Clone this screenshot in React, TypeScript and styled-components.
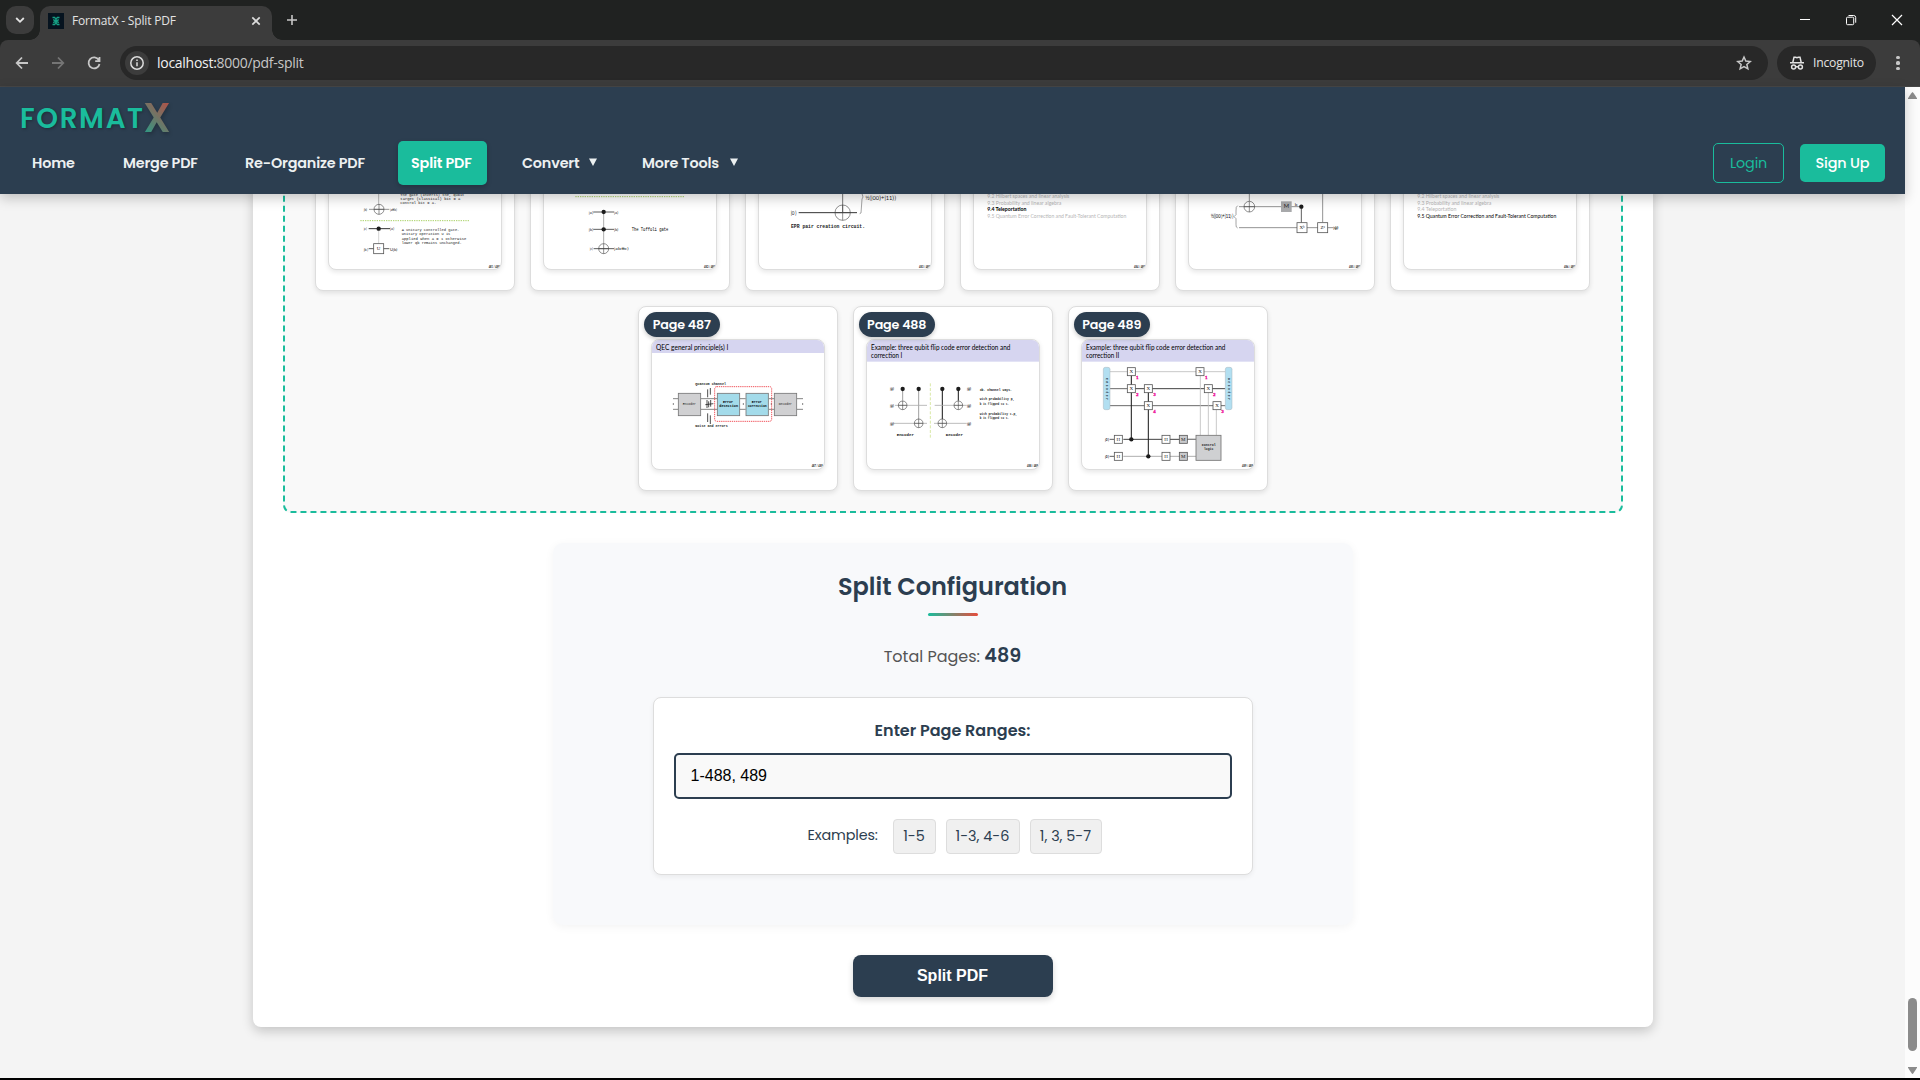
import React from "react";
import styled, { createGlobalStyle } from "styled-components";

const GlobalStyle = createGlobalStyle`
  *, *::before, *::after { box-sizing: border-box; }
  html, body { margin: 0; padding: 0; overflow: hidden; background: #000; }
`;

const brand = `Poppins, Inter, "Open Sans", "Liberation Sans", sans-serif`;
const system = `"Segoe UI", "Open Sans", "Noto Sans", sans-serif`;
const arial = `"Liberation Sans", Arial, sans-serif`;

/* ---------- browser window ---------- */

const Window = styled.div`
  width: 1920px;
  height: 1080px;
  padding-bottom: 2px;
  display: flex;
  flex-direction: column;
  background: #000;
  overflow: hidden;
  font-family: ${brand};
`;

const TabStrip = styled.div`
  height: 40px;
  flex: none;
  display: flex;
  align-items: flex-start;
  padding: 6px 0 0 6px;
  background: #202221;
`;

const TabSearch = styled.div`
  width: 28px;
  height: 28px;
  border-radius: 10px;
  background: #3c3c3c;
  display: grid;
  place-items: center;
  margin-right: 6px;
`;

const Tab = styled.div`
  position: relative;
  width: 232px;
  height: 34px;
  padding: 0 10px 4px 8px;
  border-radius: 10px 10px 0 0;
  background: #3c3c3c;
  display: flex;
  align-items: center;
  &::before, &::after {
    content: "";
    position: absolute;
    bottom: 0;
    width: 10px;
    height: 10px;
  }
  &::before { left: -10px; background: radial-gradient(circle at 0 0, transparent 9.5px, #3c3c3c 10px); }
  &::after { right: -10px; background: radial-gradient(circle at 100% 0, transparent 9.5px, #3c3c3c 10px); }
`;

const TabTitle = styled.span`
  flex: 1;
  margin-left: 8px;
  font: 400 12px/16px ${system};
  letter-spacing: -0.16px;
  color: #e3e3e3;
  white-space: nowrap;
`;

const NewTab = styled.div`
  width: 20px;
  height: 28px;
  margin-left: 10px;
  display: grid;
  place-items: center;
`;

const WindowButtons = styled.div`
  margin-left: auto;
  height: 28px;
  display: flex;
  gap: 34px;
  align-items: center;
  padding-right: 17px;
`;

const ToolbarBack = styled.div`
  flex: none;
  height: 47px;
  background: #202221;
`;

const Toolbar = styled.div`
  height: 47px;
  border-radius: 8px 8px 0 0;
  background: #3c3c3c;
  border-bottom: 1px solid #474747;
  display: flex;
  align-items: center;
  padding: 0 14px 0 12px;
`;

const NavIcon = styled.div`
  width: 20px;
  height: 20px;
  margin-right: 16px;
  display: grid;
  place-items: center;
`;

const Omnibox = styled.div`
  width: 1648px;
  height: 34px;
  border-radius: 17px;
  background: #282828;
  display: flex;
  align-items: center;
  padding: 0 14px 0 5px;
`;

const InfoCircle = styled.div`
  width: 24px;
  height: 24px;
  border-radius: 50%;
  background: #3c3c3c;
  display: grid;
  place-items: center;
`;

const Url = styled.span`
  flex: 1;
  margin-left: 8px;
  font: 400 14px/20px ${system};
  letter-spacing: -0.28px;
  color: #c7c7c7;
  b { font-weight: 400; color: #f1f1f1; }
`;

const Incognito = styled.div`
  width: 99px;
  height: 34px;
  margin-left: 9px;
  border-radius: 17px;
  background: #282828;
  display: flex;
  align-items: center;
  padding-left: 12px;
  gap: 8px;
  font: 400 12.2px/16px ${system};
  letter-spacing: -0.22px;
  color: #e3e3e3;
`;

const MenuDots = styled.div`
  width: 16px;
  margin-left: auto;
  display: flex;
  flex-direction: column;
  align-items: center;
  gap: 2.4px;
  i { width: 3.2px; height: 3.2px; border-radius: 50%; background: #c7c7c7; }
`;

const Viewport = styled.div`
  flex: 1;
  min-height: 0;
  display: flex;
`;

const Page = styled.div`
  width: 1905px;
  display: flex;
  flex-direction: column;
  background: #f4f4f4;
`;

const Scrollbar = styled.div`
  width: 15px;
  background: #fcfcfc;
  display: flex;
  flex-direction: column;
  align-items: center;
  justify-content: space-between;
  padding: 5px 0 4px;
`;

const ScrollThumb = styled.div`
  width: 9px;
  height: 53px;
  border-radius: 5px;
  background: #8b8b8b;
  margin: auto 0 16px;
`;

/* ---------- site header ---------- */

const Header = styled.header`
  position: relative;
  z-index: 2;
  flex: none;
  height: 107px;
  padding: 11px 20px 0 19px;
  background: #2c3e50;
  box-shadow: 0 4px 12px rgba(0, 0, 0, 0.22);
`;

const Logo = styled.div`
  height: 40px;
  padding: 2px 0 0 1px;
  display: flex;
  align-items: center;
  font-size: 27.7px;
  line-height: 40px;
  font-weight: 600;
  letter-spacing: 1.65px;
  color: #1abc9c;
  text-shadow: 1px 1px 3px rgba(0, 0, 0, 0.3);
`;

const LogoX = styled.span`
  margin: -2px 0 0 -1.5px;
  font-size: 40px;
  font-weight: 600;
  letter-spacing: 0;
  text-shadow: none;
  background: linear-gradient(45deg, #1abc9c, #e74c3c);
  background-clip: text;
  -webkit-background-clip: text;
  color: transparent;
  opacity: 0.8;
  filter: drop-shadow(1px 2px 2px rgba(0, 0, 0, 0.3));
`;

const NavRow = styled.nav`
  height: 50px;
  display: flex;
  align-items: center;
`;

const NavItem = styled.a<{ $w: number; $active?: boolean }>`
  width: ${(p) => p.$w}px;
  height: 44px;
  margin-right: 22px;
  padding-left: 13px;
  display: flex;
  align-items: center;
  border-radius: 5px;
  font-size: 14.4px;
  font-weight: 600;
  letter-spacing: -0.18px;
  white-space: nowrap;
  color: ${(p) => (p.$active ? "#fff" : "#ecf0f1")};
  background: ${(p) => (p.$active ? "#1abc9c" : "transparent")};
  box-shadow: ${(p) => (p.$active ? "0 2px 5px rgba(0,0,0,.2)" : "none")};
  svg { margin-left: auto; margin-right: 10px; margin-top: -2px; }
`;

const AuthButton = styled.a<{ $solid?: boolean }>`
  width: ${(p) => (p.$solid ? 85 : 71)}px;
  height: ${(p) => (p.$solid ? 38 : 40)}px;
  margin-left: ${(p) => (p.$solid ? "16px" : "auto")};
  display: grid;
  place-items: center;
  border-radius: 5px;
  border: ${(p) => (p.$solid ? "none" : "1px solid #1abc9c")};
  background: ${(p) => (p.$solid ? "#1abc9c" : "transparent")};
  color: ${(p) => (p.$solid ? "#fff" : "#1abc9c")};
  font-size: 14.4px;
  font-weight: ${(p) => (p.$solid ? 500 : 400)};
  letter-spacing: -0.15px;
`;

/* ---------- page content ---------- */

const Scroller = styled.main`
  flex: 1;
  min-height: 0;
  overflow: hidden;
  display: flex;
  flex-direction: column;
  justify-content: flex-end;
  align-items: center;
  padding-bottom: 51px;
`;

const Container = styled.div`
  flex: none;
  width: 1400px;
  padding: 30px;
  border-radius: 8px;
  background: #fff;
  box-shadow: 0 4px 12px rgba(0, 0, 0, 0.2);
  display: flex;
  flex-direction: column;
  align-items: center;
`;

const DropZone = styled.div`
  width: 1340px;
  padding: 20px;
  border: 2px dashed #1abc9c;
  border-radius: 8px;
  background: #f9f9f9;
  display: flex;
  flex-wrap: wrap;
  justify-content: center;
  gap: 15px;
`;

const Card = styled.div`
  position: relative;
  width: 200px;
  height: 185px;
  padding: 32px 12px 0;
  border: 1px solid #ddd;
  border-radius: 8px;
  background: #fff;
  box-shadow: 0 2px 5px rgba(0, 0, 0, 0.1);
`;

const Badge = styled.div`
  position: absolute;
  left: 5px;
  top: 5px;
  width: 76.5px;
  height: 25px;
  border-radius: 13px;
  background: #2c3e50;
  color: #fff;
  font-size: 12.7px;
  font-weight: 600;
  letter-spacing: -0.15px;
  line-height: 25px;
  text-align: center;
  white-space: nowrap;
  box-shadow: 0 2px 4px rgba(0, 0, 0, 0.2);
`;

const Thumb = styled.div`
  width: 174px;
  height: 131px;
  border: 1px solid #ddd;
  border-radius: 8px;
  overflow: hidden;
  background: #fff;
  box-shadow: 0 2px 5px rgba(0, 0, 0, 0.1);
  svg { display: block; width: 172px; height: 129px; }
`;

const Config = styled.section`
  width: 800px;
  height: 382px;
  margin: 30px 0;
  padding-top: 25px;
  border-radius: 10px;
  background: #f8f9fb;
  box-shadow: 0 2px 10px rgba(0, 0, 0, 0.05);
  display: flex;
  flex-direction: column;
  align-items: center;
`;

const ConfigTitle = styled.h2`
  margin: 0;
  height: 36px;
  font-size: 24px;
  line-height: 37px;
  font-weight: 600;
  color: #2c3e50;
  white-space: nowrap;
`;

const Underline = styled.div`
  width: 50px;
  height: 3px;
  margin-top: 9px;
  border-radius: 2px;
  background: linear-gradient(90deg, #1abc9c, #e74c3c);
`;

const Total = styled.p`
  margin: 25px 0 26px;
  height: 30px;
  line-height: 30px;
  font-size: 16px;
  color: #555;
  white-space: nowrap;
  strong { font-size: 19.2px; font-weight: 600; color: #2c3e50; }
`;

const RangeBox = styled.div`
  width: 600px;
  height: 178px;
  padding: 20px;
  border: 1px solid #ddd;
  border-radius: 8px;
  background: #fff;
  box-shadow: 0 2px 5px rgba(0, 0, 0, 0.06);
  display: flex;
  flex-direction: column;
  align-items: center;
`;

const RangeLabel = styled.label`
  height: 24px;
  line-height: 26px;
  font-size: 16px;
  font-weight: 600;
  color: #2c3e50;
`;

const RangeInput = styled.input`
  width: 558px;
  height: 46px;
  flex: none;
  margin: 11px 0 20px;
  padding: 0 15px;
  border: 2px solid #2c3e50;
  border-radius: 5px;
  outline: none;
  background: #f9f9f9;
  color: #000;
  font: 400 16px ${arial};
`;

const Examples = styled.div`
  display: flex;
  align-items: center;
  gap: 10px;
  padding-left: 4px;
  font-size: 14.4px;
  color: #2c3e50;
`;

const ExamplesLabel = styled.span`
  width: 70px;
  margin-right: 5px;
  padding-bottom: 2px;
  letter-spacing: -0.15px;
  white-space: nowrap;
`;

const Chip = styled.span<{ $w: number }>`
  width: ${(p) => p.$w}px;
  height: 35px;
  line-height: 33px;
  text-align: center;
  border: 1px solid #ddd;
  border-radius: 4px;
  background: #f0f0f0;
  white-space: nowrap;
`;

const SplitButton = styled.button`
  width: 200px;
  height: 42px;
  border: 0;
  border-radius: 8px;
  background: #2c3e50;
  color: #fff;
  font: 700 16px ${arial};
  box-shadow: 0 3px 6px rgba(0, 0, 0, 0.16);
`;

/* ---------- slide drawing helpers ---------- */

type LabelProps = { x: number; y: number; w: number; s?: number; c?: string; b?: boolean; mono?: boolean; children: React.ReactNode };

const Label = ({ x, y, w, s = 13, c = "#222", b, mono, children }: LabelProps) => (
  <text x={x} y={y} textLength={w} lengthAdjust="spacingAndGlyphs" fontSize={mono ? s + 2 : s} fill={c}
    fontWeight={b ? 700 : 400} fontFamily={mono ? "Liberation Mono, monospace" : "Lato, sans-serif"}>
    {children}
  </text>
);

const Wire = ({ d, c = "#333", w = 2.4, dash }: { d: string; c?: string; w?: number; dash?: string }) => (
  <path d={d} stroke={c} strokeWidth={w} strokeDasharray={dash} fill="none" />
);

const Dot = ({ x, y }: { x: number; y: number }) => <circle cx={x} cy={y} r={6.5} fill="#1c1c1c" />;

const Plus = ({ x, y, r = 13 }: { x: number; y: number; r?: number }) => (
  <g stroke="#444" strokeWidth="1.8" fill="none">
    <circle cx={x} cy={y} r={r} />
    <path d={`M${x - r} ${y}h${2 * r}M${x} ${y - r}v${2 * r}`} />
  </g>
);

const Gate = ({ x, y, t, r = 12, fill = "#fff" }: { x: number; y: number; t: string; r?: number; fill?: string }) => (
  <g>
    <rect x={x - r} y={y - r} width={2 * r} height={2 * r} fill={fill} stroke="#555" strokeWidth="2.4" />
    <text x={x} y={y + 5} textAnchor="middle" fontSize="15" fill="#222" fontFamily="Liberation Serif, serif">{t}</text>
  </g>
);

const Foot = ({ x, y, n }: { x: number; y: number; n: number }) => (
  <Label x={x} y={y} w={33} s={8} c="#111" b>{n} / 489</Label>
);

const Slide = ({ x, y, children }: { x: number; y: number; children: React.ReactNode }) => (
  <svg viewBox={`${x} ${y} 516 387`}>{children}</svg>
);

const SlideControlled = () => (
  <Slide x={87} y={-121}>
    <Wire d="M236 -20V72" c="#aaa" />
    <Wire d="M207 87H268" c="#777" />
    <Plus x={237} y={87} r={15} />
    <Label x={191} y={91} w={12}>|b⟩</Label>
    <Label x={270} y={91} w={22}>|a⊕b⟩</Label>
    <Label x={301} y={46} w={192} s={11} mono>The gate (inverts) the, qubit</Label>
    <Label x={301} y={59} w={180} s={11} mono>target (classical) bit = a</Label>
    <Label x={301} y={72} w={108} s={11} mono>control bit = a.</Label>
    <Wire d="M181 121H510" c="#93c53e" dash="4 3" />
    <Wire d="M236 145V190" c="#ccc" />
    <Wire d="M206 145H270" w={3} />
    <Dot x={236} y={145} />
    <Label x={191} y={150} w={10}>|a⟩</Label>
    <Label x={270} y={150} w={14}>|a⟩</Label>
    <Wire d="M206 205H268" />
    <Gate x={236} y={205} t="U" r={15} />
    <Label x={191} y={211} w={14}>|b⟩</Label>
    <Label x={270} y={211} w={25}>U|b⟩</Label>
    <Label x={305} y={152} w={173} s={11} mono>A unitary controlled gate.</Label>
    <Label x={305} y={165} w={146} s={11} mono>Unitary operation U is</Label>
    <Label x={305} y={179} w={194} s={11} mono>applied when a = 1 otherwise</Label>
    <Label x={305} y={192} w={180} s={11} mono>lower qb remains unchanged.</Label>
    <Foot x={566} y={262} n={481} />
  </Slide>
);

const SlideToffoli = () => (
  <Slide x={732} y={-121}>
    <Wire d="M826 49H1155" c="#93c53e" dash="4 3" />
    <Wire d="M911 95V190" c="#999" />
    <Wire d="M880 95H942M880 147H942M881 205H942" />
    <Dot x={911} y={95} />
    <Dot x={911} y={147} />
    <Plus x={911} y={205} r={15} />
    <Label x={866} y={100} w={15}>|a⟩</Label>
    <Label x={942} y={100} w={15}>|a⟩</Label>
    <Label x={866} y={151} w={15}>|b⟩</Label>
    <Label x={942} y={151} w={15}>|b⟩</Label>
    <Label x={869} y={209} w={11}>|c⟩</Label>
    <Label x={942} y={209} w={46}>|ab⊕c⟩</Label>
    <Label x={995} y={152} w={110} s={12} c="#000" mono>The Toffoli gate</Label>
    <Foot x={1212} y={262} n={482} />
  </Slide>
);

const SlideEpr = () => (
  <Slide x={57} y={-121}>
    <Wire d="M308 0V97" c="#555" />
    <Wire d="M176 97H351" w={3} />
    <Plus x={308} y={97} r={23} />
    <Label x={152} y={103} w={16} s={19}>|0⟩</Label>
    <Wire d="M366 40Q372 52 366 56L363 98L359 100" c="#555" w={1.6} />
    <Label x={376} y={59} w={92} s={17}>½(|00⟩+|11⟩)</Label>
    <Label x={153} y={143} w={222} s={12} mono b>EPR pair creation circuit.</Label>
    <Foot x={537} y={262} n={483} />
  </Slide>
);

const toc = [
  "9.2  Hilbert spaces and linear analysis",
  "9.3  Probability and linear algebra",
  "9.4  Teleportation",
  "9.5  Quantum Error Correction and Fault-Tolerant Computation",
];
const tocWidth = [246, 222, 117, 417];

const SlideContents = ({ current, page }: { current: number; page: number }) => (
  <Slide x={702} y={-121}>
    {toc.map((t, i) => (
      <Label key={t} x={742} y={54 + i * 19.4} w={tocWidth[i]} s={15} c={i === current ? "#000" : "#b5b5b5"} b={i === current && i === 2}>{t}</Label>
    ))}
    <Foot x={1182} y={262} n={page} />
  </Slide>
);

const SlideTeleport = () => (
  <Slide x={57} y={-121}>
    <Wire d="M238 0V62M458 0V126" c="#777" />
    <Wire d="M207 79H394M207 142H490" c="#777" />
    <Plus x={238} y={79} r={16} />
    <rect x={333} y={63} width={32} height={32} fill="#a8a9ab" />
    <Label x={341} y={84} w={16} s={17}>M</Label>
    <Label x={374} y={77} w={8} s={13}>b</Label>
    <Wire d="M394 79V127" />
    <Dot x={394} y={79} />
    <Gate x={396} y={142} t="Xᵇ" r={15} />
    <Gate x={458} y={142} t="Zᵃ" r={15} />
    <Label x={490} y={146} w={18} b>|ψ⟩</Label>
    <Label x={122} y={114} w={68} s={14} c="#000">½(|00⟩+|11⟩)</Label>
    <Wire d="M203 76Q197 78 198 92V103L192 109L198 115V132Q197 142 203 143" c="#555" w={1.6} />
    <Foot x={537} y={262} n={485} />
  </Slide>
);

const SlidePrinciples = () => (
  <Slide x={66} y={120}>
    <rect x={66} y={119} width={518} height={40} fill="#d6d5f0" />
    <Label x={78} y={149} w={217} s={21} c="#000">QEC general principle(s) I</Label>
    <Wire d="M129 296H145M129 328H145M213 296H262M213 328H262M329 296H347M329 328H347M416 296H433M416 328H433M501 296H519M501 328H519" c="#666" />
    <Wire d="M130 309v6M340 309v6M424 309v6M518 309v6" c="#666" />
    {[[145, "#d0d0d2", "Encoder", ""], [262, "#a3dbea", "Error", "detection"], [348, "#a3dbea", "Error", "correction"], [433, "#d0d0d2", "Decoder", ""]].map(([x, f, a, b]) => (
      <g key={a + String(x)}>
        <rect x={x as number} y={280} width={67} height={67} fill={f as string} stroke="#777" strokeWidth="2.5" />
        {b ? (
          <>
            <Label x={(x as number) + 17} y={308} w={30} s={8} c="#000" mono b>{a}</Label>
            <Label x={(x as number) + 6} y={321} w={56} s={8} c="#000" mono b>{b}</Label>
          </>
        ) : (
          <Label x={(x as number) + 13} y={316} w={40} s={8} mono>{a}</Label>
        )}
      </g>
    ))}
    <rect x={254} y={260} width={171} height={104} rx={6} fill="none" stroke="#ee3a43" strokeWidth="2.6" strokeDasharray="4 2.4" />
    <Wire d="M233 268v24M241 264v20M231 300v24M236 304v18M242 300v20M233 340v26M241 346v26M226 314l24-3" c="#222" />
    <Label x={196} y={254} w={92} s={10} mono b>Quantum channel</Label>
    <Label x={196} y={382} w={97} s={7} mono b>Noise and errors</Label>
    <Foot x={545} y={501} n={487} />
  </Slide>
);

const SlideHeading = ({ x, num }: { x: number; num: string }) => (
  <g>
    <rect x={x} y={119} width={518} height={66} fill="#d6d5f0" />
    <Label x={x + 12} y={149} w={418} s={20} c="#000">Example: three qubit flip code error detection and</Label>
    <Label x={x + 12} y={174} w={num.length > 1 ? 100 : 94} s={20} c="#000">correction {num}</Label>
  </g>
);

const SlideFlipOne = () => (
  <Slide x={711} y={120}>
    <SlideHeading x={711} num="I" />
    <Wire d="M818 267V302M866 267V357" c="#888" />
    <Wire d="M937 267V357M985 267V302" w={3.2} c="#222" />
    <Wire d="M795 316H891M790 370H891M914 316H1010M912 370H1010" c="#aaa" />
    <Wire d="M901 250V418" c="#d9e8a6" w={3} dash="9 5" />
    {[818, 866, 937, 985].map((x) => <Dot key={x} x={x} y={267} />)}
    <Plus x={818} y={316} />
    <Plus x={866} y={370} />
    <Plus x={937} y={370} />
    <Plus x={985} y={316} />
    {[267, 316, 370].map((y) => (
      <g key={y}>
        <Label x={780} y={y + 4} w={13} b>|ψ⟩</Label>
        <Label x={1011} y={y + 4} w={14} b>|ψ⟩</Label>
      </g>
    ))}
    <Label x={800} y={408} w={52} s={10} mono b>Encoder</Label>
    <Label x={947} y={408} w={52} s={10} mono b>Decoder</Label>
    <Label x={1049} y={272} w={97} s={10} mono b>3b. Channel ways.</Label>
    <Label x={1049} y={300} w={104} s={10} mono b>With probability p,</Label>
    <Label x={1049} y={314} w={88} s={10} mono b>b is flipped to 1.</Label>
    <Label x={1049} y={344} w={112} s={10} mono b>With probability 1-p,</Label>
    <Label x={1049} y={358} w={88} s={10} mono b>b is flipped to 1.</Label>
    <Foot x={1191} y={501} n={488} />
  </Slide>
);

const SlideFlipTwo = () => (
  <Slide x={426} y={120}>
    <SlideHeading x={426} num="II" />
    <Wire d="M510 215H856" c="#bbb" />
    <Wire d="M510 266H574M510 317H856" c="#444" />
    <Wire d="M574 266H856M550 418H768" c="#333" w={2.8} />
    <Wire d="M550 469H768M744 418H768" c="#999" />
    <Wire d="M781 215V406M805 266V406M829 317V406" c="#bbb" />
    <Wire d="M574 215V418M625 266V469" c="#222" w={3.2} />
    {[490, 856].map((x) => (
      <g key={x}>
        <rect x={x} y={202} width={20} height={127} rx={6} fill="#b2dff1" stroke="#a6b5bd" strokeWidth="1.5" />
        <text transform={`translate(${x + 7} 234) rotate(90)`} fontSize="9" fontWeight="700" textLength="66" fontFamily="Liberation Mono, monospace" fill="#234">{x === 490 ? "Encoder" : "Decoder"}</text>
      </g>
    ))}
    <Gate x={574} y={215} t="X" />
    <Gate x={780} y={215} t="X" />
    <Gate x={574} y={266} t="X" />
    <Gate x={625} y={266} t="X" />
    <Gate x={805} y={266} t="X" />
    <Gate x={625} y={317} t="X" />
    <Gate x={831} y={317} t="X" />
    {[[588, 238, 1], [588, 289, 2], [640, 289, 3], [640, 339, 4], [795, 238, 1], [819, 287, 2], [844, 339, 3]].map(([x, y, n]) => (
      <text key={`${x}-${y}`} x={x} y={y} fontSize="13" fontWeight="700" fill="#ee1199" stroke="#ee1199" strokeWidth="1" fontFamily="Lato, sans-serif">{n}</text>
    ))}
    {[418, 469].map((y) => (
      <g key={y}>
        <Label x={495} y={y + 4} w={12} b>|0⟩</Label>
        <Wire d={`M509 ${y}h14`} />
        <Gate x={535} y={y} t="H" />
        <Gate x={678} y={y} t="H" />
        <Gate x={730} y={y} t="M" fill="#c9cacc" />
      </g>
    ))}
    <Dot x={574} y={418} />
    <Dot x={625} y={469} />
    <rect x={768} y={406} width={75} height={75} fill="#cfd0d2" stroke="#777" strokeWidth="2.6" />
    <Label x={785} y={438} w={42} s={8} mono b>Control</Label>
    <Label x={792} y={450} w={28} s={8} mono b>logic</Label>
    <Foot x={906} y={501} n={489} />
  </Slide>
);

const slides: { page: number; art: React.ReactNode }[] = [
  { page: 481, art: <SlideControlled /> },
  { page: 482, art: <SlideToffoli /> },
  { page: 483, art: <SlideEpr /> },
  { page: 484, art: <SlideContents current={2} page={484} /> },
  { page: 485, art: <SlideTeleport /> },
  { page: 486, art: <SlideContents current={3} page={486} /> },
  { page: 487, art: <SlidePrinciples /> },
  { page: 488, art: <SlideFlipOne /> },
  { page: 489, art: <SlideFlipTwo /> },
];

/* ---------- icons ---------- */

const Line = ({ d, size = 20, c = "#c7c7c7", w = 1.8 }: { d: string; size?: number; c?: string; w?: number }) => (
  <svg width={size} height={size} viewBox={`0 0 ${size} ${size}`} fill="none" stroke={c} strokeWidth={w}>
    <path d={d} />
  </svg>
);

const Caret = () => (
  <svg width="8" height="8" viewBox="0 0 8 8"><path d="M0 .5h8L4 8z" fill="#ecf0f1" /></svg>
);

export default function App() {
  return (
    <Window>
      <GlobalStyle />
      <TabStrip>
        <TabSearch><Line size={10} c="#e3e3e3" d="M1.2 3l3.8 3.8L8.8 3" /></TabSearch>
        <Tab>
          <svg width="16" height="16" viewBox="0 0 16 16">
            <rect width="16" height="16" fill="#06131f" />
            <path d="M4.5 4.5h2.2l1.3 2 1.3-2h2.2M4.5 11.5h2.2l1.3-2 1.3 2h2.2M5.2 6.6L10.8 9.6M10.8 6.6L5.2 9.6" stroke="#16a085" strokeWidth="1.3" fill="none" />
          </svg>
          <TabTitle>FormatX - Split PDF</TabTitle>
          <Line size={12} c="#dcdcdc" w={1.7} d="M2.3 2.3l7.4 7.4M9.7 2.3L2.3 9.7" />
        </Tab>
        <NewTab><Line size={12} d="M6 1v10M1 6h10" w={1.6} /></NewTab>
        <WindowButtons>
          <Line size={12} c="#fff" w={1} d="M1 5.5h10" />
          <Line size={12} c="#fff" w={1} d="M1.5 4.2a1 1 0 0 1 1-1h5.2a1 1 0 0 1 1 1v5.5a1 1 0 0 1-1 1H2.5a1 1 0 0 1-1-1zM3.5 1.5h5.2a2 2 0 0 1 2 2v5.2" />
          <Line size={12} c="#fff" w={1.2} d="M1 1l10 10M11 1L1 11" />
        </WindowButtons>
      </TabStrip>
      <ToolbarBack>
        <Toolbar>
          <NavIcon><Line d="M16 10H5M10 4.5L4.7 10l5.3 5.5" /></NavIcon>
          <NavIcon><Line c="#757575" d="M4 10h11M10 4.5l5.3 5.500-5.3 5.5" /></NavIcon>
          <NavIcon><Line d="M14.8 7A5.5 5.5 0 1 0 15.5 11M15.5 4v4.200h-4.3" /></NavIcon>
          <Omnibox>
            <InfoCircle>
              <svg width="16" height="16" viewBox="0 0 16 16" fill="none" stroke="#dcdcdc" strokeWidth="1.5">
                <circle cx="8" cy="8" r="6.2" />
                <path d="M8 7.2v4M8 4.5v1.5" />
              </svg>
            </InfoCircle>
            <Url><b>localhost:</b>8000/pdf-split</Url>
            <svg width="20" height="20" viewBox="0 0 20 20" fill="none" stroke="#c7c7c7" strokeWidth="1.5">
              <path d="M10 4l1.800 4.100 4.400.4-3.350 2.950 1 4.350L10 13.500l-3.850 2.300 1-4.350L3.800 8.500l4.400-.4z" />
            </svg>
          </Omnibox>
          <Incognito>
            <svg width="16" height="16" viewBox="0 0 16 16" fill="none" stroke="#e3e3e3" strokeWidth="1.5">
              <path d="M1 7.8h14M3.800 7.5L5 2.200h1.500l1.500.6 1.500-.6H11l1.200 5.300M6.800 11.700h2.400" />
              <circle cx="4.6" cy="12" r="2" />
              <circle cx="11.4" cy="12" r="2" />
            </svg>
            Incognito
          </Incognito>
          <MenuDots><i /><i /><i /></MenuDots>
        </Toolbar>
      </ToolbarBack>
      <Viewport>
        <Page>
          <Header>
            <Logo>FORMAT<LogoX>X</LogoX></Logo>
            <NavRow>
              <NavItem $w={69}>Home</NavItem>
              <NavItem $w={100}>Merge PDF</NavItem>
              <NavItem $w={144}>Re-Organize PDF</NavItem>
              <NavItem $w={89} $active>Split PDF</NavItem>
              <NavItem $w={98}>Convert<Caret /></NavItem>
              <NavItem $w={119}>More Tools<Caret /></NavItem>
              <AuthButton>Login</AuthButton>
              <AuthButton $solid>Sign Up</AuthButton>
            </NavRow>
          </Header>
          <Scroller>
            <Container>
              <DropZone>
                {slides.map((s) => (
                  <Card key={s.page}>
                    {s.page > 486 && <Badge>Page {s.page}</Badge>}
                    <Thumb>{s.art}</Thumb>
                  </Card>
                ))}
              </DropZone>
              <Config>
                <ConfigTitle>Split Configuration</ConfigTitle>
                <Underline />
                <Total>Total Pages: <strong>489</strong></Total>
                <RangeBox>
                  <RangeLabel>Enter Page Ranges:</RangeLabel>
                  <RangeInput defaultValue="1-488, 489" />
                  <Examples>
                    <ExamplesLabel>Examples:</ExamplesLabel>
                    <Chip $w={43}>1-5</Chip>
                    <Chip $w={74}>1-3, 4-6</Chip>
                    <Chip $w={72}>1, 3, 5-7</Chip>
                  </Examples>
                </RangeBox>
              </Config>
              <SplitButton>Split PDF</SplitButton>
            </Container>
          </Scroller>
        </Page>
        <Scrollbar>
          <svg width="9" height="7" viewBox="0 0 9 7"><path d="M4.5 0Q5 0 9 6.3V7H0V6.300Q4 0 4.5 0z" fill="#8b8b8b" /></svg>
          <ScrollThumb />
          <svg width="9" height="7" viewBox="0 0 9 7"><path d="M4.5 7Q5 7 9 .7V0H0V.7Q4 7 4.500 7z" fill="#8b8b8b" /></svg>
        </Scrollbar>
      </Viewport>
    </Window>
  );
}
